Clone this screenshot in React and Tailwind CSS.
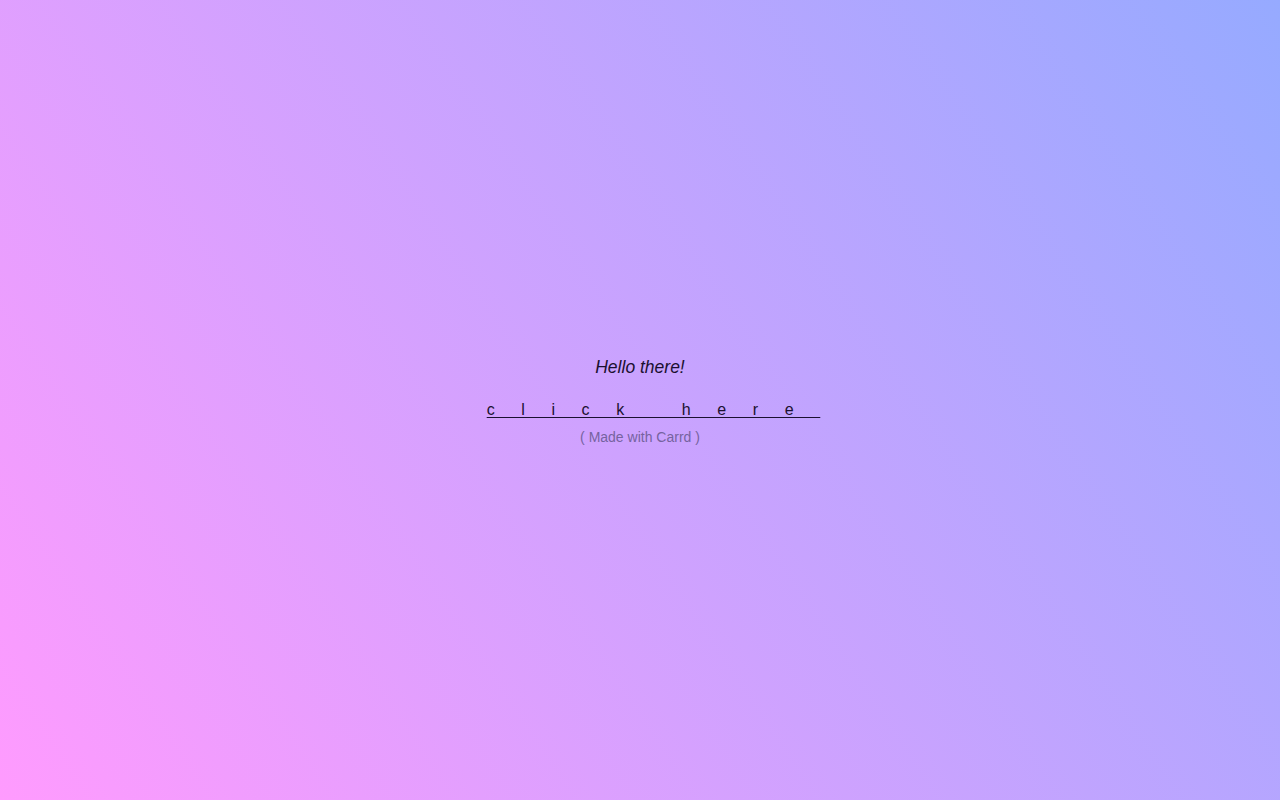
import React from 'react';

export default function App() {
  return (
    <div
      className="flex min-h-[800px] w-full flex-col items-center justify-center bg-[linear-gradient(56deg,#ff9bfe_0%,#96aaff_100%)] font-['Liberation_Sans',Arial,sans-serif]"
    >
      <div className="flex flex-col items-center pt-[3px]">
        <p className="text-[17.5px] italic leading-none text-[#1b1030]">Hello there!</p>
        <a
          href="#"
          className="-mr-[27px] mt-[26px] text-[16px] leading-none tracking-[26.6px] text-[#1b1030] underline decoration-1 underline-offset-[2px]"
        >
          click here
        </a>
        <p className="mt-[12px] text-[14px] leading-none text-[#76639f]">( Made with Carrd )</p>
      </div>
    </div>
  );
}
